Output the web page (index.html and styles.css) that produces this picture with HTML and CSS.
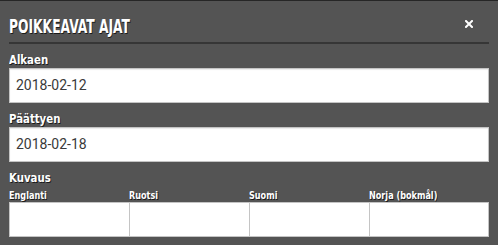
FILE: index.html
```html
<!DOCTYPE html>
<html lang="fi">
<head>
    <meta charset="UTF-8">
    <title>Poikkeavat ajat</title>
    <link rel="stylesheet" href="styles.css">
</head>
<body>
    <div class="dialog">
        <div class="dialog-header">
            <h1>POIKKEAVAT AJAT</h1>
            <svg class="close" width="8" height="8" viewBox="0 0 8 8">
                <path d="M1 1 L7 7 M7 1 L1 7" stroke="#fff" stroke-width="2" stroke-linecap="square"/>
            </svg>
        </div>

        <div class="field">
            <label>Alkaen</label>
            <div class="input">2018-02-12</div>
        </div>
        <div class="field">
            <label>Päättyen</label>
            <div class="input">2018-02-18</div>
        </div>
        <div class="field">
            <label>Kuvaus</label>
            <div class="langs">
                <div class="lang">
                    <span>Englanti</span>
                    <div class="box"></div>
                </div>
                <div class="lang">
                    <span>Ruotsi</span>
                    <div class="box"></div>
                </div>
                <div class="lang">
                    <span>Suomi</span>
                    <div class="box"></div>
                </div>
                <div class="lang">
                    <span>Norja (bokmål)</span>
                    <div class="box"></div>
                </div>
            </div>
        </div>
    </div>
</body>
</html>
```

FILE: styles.css
```css
body {
    margin: 0;
    background-color: #545454;
    font-family: "DejaVu Sans Condensed", "DejaVu Sans", sans-serif;
    color: #fff;
}
.dialog {
    border-top: 1px solid #262626;
    padding: 0 9px;
    height: 244px;
}
.dialog-header {
    display: flex;
    justify-content: space-between;
    align-items: flex-start;
    height: 41px;
    border-bottom: 2px solid #363636;
}
h1 {
    margin: 14px 0 0;
    font-size: 19px;
    line-height: 22px;
    font-weight: bold;
    text-shadow: 1px 1px 0 #1a1a1a;
    transform: scaleX(0.72);
    transform-origin: left center;
}
.close {
    display: block;
    margin: 19px 16px 0 0;
}
.field {
    margin-top: 8px;
}
.field:first-of-type {
    margin-top: 9px;
}
.field label {
    display: block;
    font-size: 13px;
    font-weight: bold;
    line-height: 15px;
    text-shadow: 1px 1px 0 #1a1a1a;
    transform: scaleX(0.87);
    transform-origin: left center;
}
.input {
    margin-top: 1px;
    height: 33px;
    line-height: 33px;
    background: #fff;
    border: 1px solid #c4c4c4;
    box-shadow: inset 0 1px 1px rgba(0,0,0,0.08);
    padding: 0 6px;
    font-family: Roboto, Arial, sans-serif;
    font-size: 14px;
    color: #3a3a3a;
}
.langs {
    display: grid;
    grid-template-columns: repeat(4, 1fr);
    margin-top: 4px;
}
.lang span {
    display: block;
    font-size: 11px;
    font-weight: bold;
    line-height: 13px;
    text-shadow: 1px 1px 0 #1a1a1a;
    transform: scaleX(0.82);
    transform-origin: left center;
}
.box {
    height: 33px;
    background: #fff;
    border: 1px solid #c4c4c4;
    border-right: none;
}
.lang:last-child .box {
    border-right: 1px solid #c4c4c4;
}
```
